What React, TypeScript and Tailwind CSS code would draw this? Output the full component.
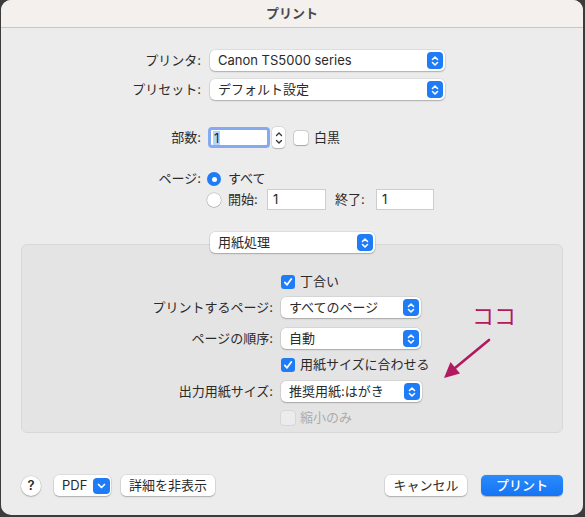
import { FC, ReactNode } from "react";

const BLUE = "bg-[#1d7cf6]";

const UpDown: FC = () => (
  <span className={`flex h-[17px] w-[16px] shrink-0 items-center justify-center rounded-[4px] ${BLUE}`}>
    <svg width="8" height="12" viewBox="0 0 8 12" fill="none" stroke="white" strokeWidth="1.6" strokeLinecap="round" strokeLinejoin="round">
      <path d="M1.5 4.5 L4 2 L6.5 4.5" />
      <path d="M1.5 7.5 L4 10 L6.5 7.5" />
    </svg>
  </span>
);

const Popup: FC<{ text: string; className: string }> = ({ text, className }) => (
  <div
    className={`flex h-[21px] shrink-0 items-center justify-between rounded-[5px] bg-white pl-[8px] pr-[2px] shadow-[0_0_0_0.5px_rgba(0,0,0,0.12),0_1px_1.5px_rgba(0,0,0,0.22)] ${className}`}
  >
    <span className="leading-none">{text}</span>
    <UpDown />
  </div>
);

const Check: FC<{ on?: boolean; disabled?: boolean }> = ({ on, disabled }) =>
  on ? (
    <span className={`flex h-[14px] w-[14px] shrink-0 items-center justify-center rounded-[3px] ${BLUE}`}>
      <svg width="10" height="10" viewBox="0 0 10 10" fill="none" stroke="white" strokeWidth="1.8" strokeLinecap="round" strokeLinejoin="round">
        <path d="M1.8 5.4 L4 7.8 L8.3 2" />
      </svg>
    </span>
  ) : (
    <span
      className={`block h-[14px] w-[14px] shrink-0 rounded-[3px] ${
        disabled
          ? "bg-[#ececec] shadow-[0_0_0_0.5px_rgba(0,0,0,0.12)]"
          : "bg-white shadow-[0_0_0_0.5px_rgba(0,0,0,0.22),0_0.5px_1px_rgba(0,0,0,0.2)]"
      }`}
    />
  );

const Radio: FC<{ on?: boolean }> = ({ on }) =>
  on ? (
    <span className={`flex h-[14px] w-[14px] shrink-0 items-center justify-center rounded-full ${BLUE}`}>
      <span className="block h-[5px] w-[5px] rounded-full bg-white" />
    </span>
  ) : (
    <span className="block h-[14px] w-[14px] shrink-0 rounded-full bg-white shadow-[0_0_0_0.5px_rgba(0,0,0,0.24),0_0.5px_1px_rgba(0,0,0,0.2)]" />
  );

const Field: FC<{ className: string; children: ReactNode }> = ({ className, children }) => (
  <div className={`flex h-[21px] shrink-0 items-center border border-[#cdcdcd] bg-white pl-[5px] ${className}`}>
    {children}
  </div>
);

const Button: FC<{ className?: string; children: ReactNode }> = ({ className = "", children }) => (
  <div
    className={`flex h-[21px] shrink-0 items-center justify-center rounded-[5px] bg-white shadow-[0_0_0_0.5px_rgba(0,0,0,0.12),0_1px_1.5px_rgba(0,0,0,0.22)] ${className}`}
  >
    {children}
  </div>
);

export default function App() {
  return (
    <div className="h-[517px] w-[585px] bg-[#3c3c3c] font-['Inter','Noto_Sans_CJK_JP',sans-serif] text-[13px] text-[#2a2a2a]">
      <div className="relative ml-[1px] flex h-[515px] w-[582px] flex-col overflow-hidden rounded-[10px] bg-[#ececec]">
        {/* title bar */}
        <div className="flex h-[28px] items-center justify-center border-b border-[#c6c6c6] bg-[#f4f0ee] font-bold text-[#4a4a4a]">
          プリント
        </div>

        {/* printer / preset */}
        <div className="mt-[22px] flex h-[21px] items-center">
          <span className="w-[200px] text-right">プリンタ:</span>
          <Popup text="Canon TS5000 series" className="ml-[9px] w-[235px]" />
        </div>
        <div className="mt-[8px] flex h-[21px] items-center">
          <span className="w-[200px] text-right">プリセット:</span>
          <Popup text="デフォルト設定" className="ml-[9px] w-[235px]" />
        </div>

        {/* copies */}
        <div className="mt-[27px] flex h-[21px] items-center">
          <span className="w-[200px] text-right">部数:</span>
          <div className="ml-[7px] flex h-[21px] w-[62px] items-center rounded-[4px] border-[3px] border-[#86aaf0] bg-white pl-[2px]">
            <span className="bg-[#b4d5fe] px-[1px] leading-[14px]">1</span>
          </div>
          <div className="ml-[2px] flex h-[21px] w-[13px] flex-col items-center justify-center rounded-[4px] bg-white shadow-[0_0_0_0.5px_rgba(0,0,0,0.12),0_0.5px_1px_rgba(0,0,0,0.2)]">
            <svg width="8" height="16" viewBox="0 0 8 16" fill="none" stroke="#333" strokeWidth="1.3" strokeLinecap="round" strokeLinejoin="round">
              <path d="M1.5 5.5 L4 3 L6.5 5.5" />
              <path d="M1.5 10.5 L4 13 L6.5 10.5" />
            </svg>
          </div>
          <span className="ml-[9px]">
            <Check />
          </span>
          <span className="ml-[6px]">白黒</span>
        </div>

        {/* pages */}
        <div className="mt-[21px] flex h-[20px] items-center">
          <span className="w-[200px] text-right">ページ:</span>
          <span className="ml-[6px]">
            <Radio on />
          </span>
          <span className="ml-[7px]">すべて</span>
        </div>
        <div className="flex h-[21px] items-center">
          <span className="w-[200px]" />
          <span className="ml-[6px]">
            <Radio />
          </span>
          <span className="ml-[7px] w-[39px]">開始:</span>
          <Field className="w-[59px]">1</Field>
          <span className="ml-[9px] w-[41px]">終了:</span>
          <Field className="w-[58px]">1</Field>
        </div>

        {/* paper handling group */}
        <div className="mx-[20px] mt-[34px] flex flex-col rounded-[6px] border border-[#d8d8d8] bg-[#e4e4e4] pb-[6px]">
          <div className="relative z-10 -mt-[13px] ml-[188px]">
            <Popup text="用紙処理" className="w-[165px]" />
          </div>

          <div className="mt-[21px] flex h-[16px] items-center">
            <span className="w-[259px]" />
            <Check on />
            <span className="ml-[5px]">丁合い</span>
          </div>
          <div className="mt-[7px] flex h-[21px] items-center">
            <span className="w-[251px] text-right">プリントするページ:</span>
            <Popup text="すべてのページ" className="ml-[8px] w-[140px]" />
          </div>
          <div className="mt-[10px] flex h-[21px] items-center">
            <span className="w-[251px] text-right">ページの順序:</span>
            <Popup text="自動" className="ml-[8px] w-[140px]" />
          </div>
          <div className="mt-[8px] flex h-[16px] items-center">
            <span className="w-[259px]" />
            <Check on />
            <span className="ml-[5px]">用紙サイズに合わせる</span>
          </div>
          <div className="mt-[8px] flex h-[21px] items-center">
            <span className="w-[251px] text-right">出力用紙サイズ:</span>
            <Popup text="推奨用紙:はがき" className="ml-[8px] w-[141px]" />
          </div>
          <div className="mt-[8px] flex h-[16px] items-center text-[#acacac]">
            <span className="w-[259px]" />
            <Check disabled />
            <span className="ml-[5px]">縮小のみ</span>
          </div>
        </div>

        {/* annotation */}
        <span className="absolute left-[471px] top-[305px] text-[22px] leading-[22px] text-[#b3195e]">
          ココ
        </span>
        <svg className="absolute left-[439px] top-[335px]" width="54" height="48" viewBox="0 0 54 48">
          <line x1="49" y1="5" x2="15" y2="33" stroke="#b3195e" strokeWidth="2.6" strokeLinecap="round" />
          <polygon points="4,43 20,38.5 10.5,27" fill="#b3195e" />
        </svg>

        {/* bottom bar */}
        <div className="mt-auto flex items-center px-[20px] pb-[19px]">
          <div className="flex h-[20px] w-[20px] items-center justify-center rounded-full bg-white font-semibold shadow-[0_0_0_0.5px_rgba(0,0,0,0.12),0_1px_1.5px_rgba(0,0,0,0.22)]">
            ?
          </div>
          <Button className="ml-[13px] w-[57px] justify-start pl-[8px]">
            <span>PDF</span>
            <span className={`ml-auto mr-[1px] flex h-[16px] w-[17px] items-center justify-center rounded-[4px] ${BLUE}`}>
              <svg width="9" height="6" viewBox="0 0 9 6" fill="none" stroke="white" strokeWidth="1.7" strokeLinecap="round" strokeLinejoin="round">
                <path d="M1.5 1.5 L4.5 4.5 L7.5 1.5" />
              </svg>
            </span>
          </Button>
          <Button className="ml-[10px] w-[94px]">詳細を非表示</Button>
          <div className="flex-1" />
          <Button className="w-[82px]">キャンセル</Button>
          <div className="ml-[14px] flex h-[21px] w-[82px] items-center justify-center rounded-[5px] bg-gradient-to-b from-[#2a8bfb] to-[#1474f5] font-medium text-white shadow-[0_0.5px_1px_rgba(0,0,0,0.25)]">
            プリント
          </div>
        </div>
      </div>
    </div>
  );
}
